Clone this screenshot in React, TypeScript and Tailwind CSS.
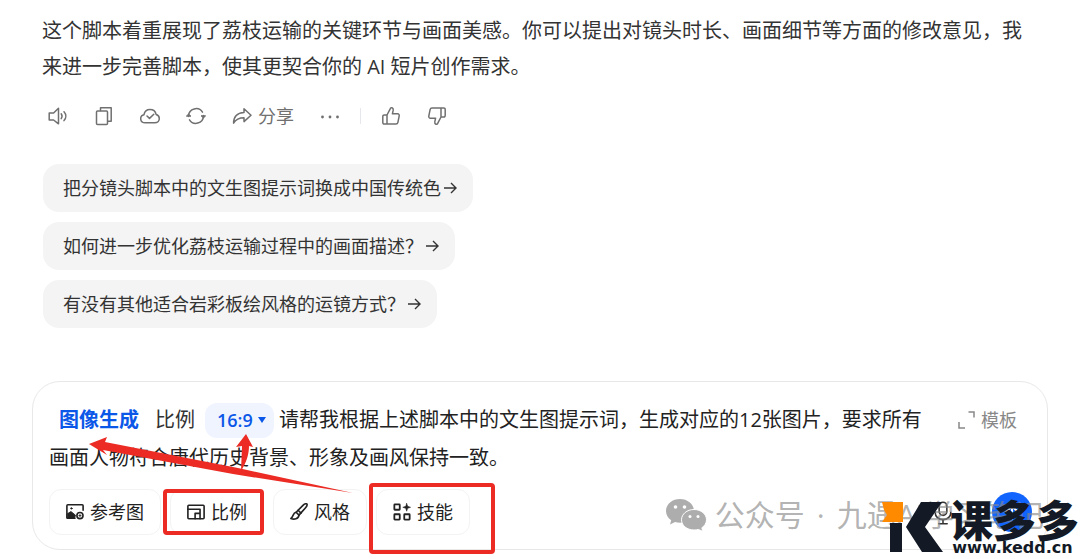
import React from 'react';

const suggestions = [
  '把分镜头脚本中的文生图提示词换成中国传统色',
  '如何进一步优化荔枝运输过程中的画面描述？',
  '有没有其他适合岩彩板绘风格的运镜方式？',
];

type IconProps = { children: React.ReactNode; className?: string; stroke?: number };

const Icon = ({ children, className = 'size-5', stroke = 1.5 }: IconProps) => (
  <svg
    viewBox="0 0 20 20"
    className={`shrink-0 ${className}`}
    fill="none"
    stroke="currentColor"
    strokeWidth={stroke}
    strokeLinecap="round"
    strokeLinejoin="round"
    aria-hidden="true"
  >
    {children}
  </svg>
);

const ThumbPath = () => (
  <path d="M6 9v9M6 9l3.2-6.2c.3-.9 1-1.3 1.8-1 1 .4 1.4 1.3 1.2 2.4l-.8 3.6h5.2c1.1 0 1.8.9 1.6 2l-1.3 6.6c-.2 1-.9 1.6-1.9 1.6H3.2c-.8 0-1.4-.6-1.4-1.4v-6.2C1.8 9.6 2.4 9 3.2 9z" />
);

const ActionBar = () => (
  <div className="mt-[19px] flex h-6 items-center gap-[26px] pl-4 text-[#707070]">
    <button aria-label="朗读">
      <Icon>
        <path d="M10.5 2.2v15.6L5.6 14H1.2V7h4.4z" />
        <path d="M13.2 7.8c1 1.4 1 3.4 0 4.8M16 5.8c2.4 2.6 2.4 6.2 0 8.8" />
      </Icon>
    </button>
    <button aria-label="复制">
      <Icon>
        <rect x="2.5" y="5" width="11" height="13.5" rx="1" />
        <path d="M6.5 4.5V1.8h10.7v13.4h-3.4" />
      </Icon>
    </button>
    <button aria-label="收藏">
      <Icon>
        <path d="M5.2 16.8c-2.6 0-4.5-1.7-4.5-4.1 0-2 1.3-3.6 3.3-4 .5-3 2.9-5.2 6-5.2s5.5 2 6.1 4.9c1.9.5 3.2 2.1 3.2 4.1 0 2.5-1.9 4.3-4.5 4.3z" />
        <path d="M7 10l2.5 2.4 4.3-4.2" />
      </Icon>
    </button>
    <button aria-label="重新生成">
      <Icon>
        <path d="M2.5 10.5v-.7a7.6 7.6 0 0 1 14-3.6M17.5 9.5v.7a7.6 7.6 0 0 1-14 3.6" />
        <path d="M.6 10l1.9-2 2.2 2zM15.3 10l2.2 2 1.9-2z" fill="currentColor" strokeWidth="1" />
      </Icon>
    </button>
    <button className="flex items-center gap-1.5 text-lg leading-6">
      <Icon>
        <path d="M12 2.8l7 6.4-7 6.4v-3.8c-5 0-8.2 1.7-10.4 5.4C1.6 10.8 5.6 7 12 6.6z" />
      </Icon>
      分享
    </button>
    <button aria-label="更多">
      <Icon>
        <g fill="currentColor" stroke="none">
          <circle cx="2.5" cy="11" r="1.4" />
          <circle cx="10" cy="11" r="1.4" />
          <circle cx="17.5" cy="11" r="1.4" />
        </g>
      </Icon>
    </button>
    <span className="-mx-1.5 h-4 w-px bg-gray-200" />
    <button aria-label="赞">
      <Icon>
        <ThumbPath />
      </Icon>
    </button>
    <button aria-label="踩">
      <Icon className="size-5 rotate-180">
        <ThumbPath />
      </Icon>
    </button>
  </div>
);

const Suggestions = () => (
  <div className="mt-9 flex flex-col items-start gap-2.5 pl-[11px]">
    {suggestions.map((text) => (
      <button
        key={text}
        className="flex h-12 items-center gap-0.5 rounded-2xl bg-[#f4f4f4] pr-4 pl-5 text-lg text-[#333]"
      >
        {text}
        <svg viewBox="0 0 14 12" className="h-3 w-3.5" fill="none" stroke="currentColor" strokeWidth="1.4">
          <path d="M1 6h12M8 1l5 5-5 5" />
        </svg>
      </button>
    ))}
  </div>
);

const Editor = () => (
  <div className="grid flex-1">
    <textarea
      aria-label="输入提示词"
      rows={2}
      className="col-start-1 row-start-1 block w-full resize-none overflow-hidden bg-transparent indent-[230px] text-xl leading-[38px] text-[#222] outline-none"
      defaultValue="请帮我根据上述脚本中的文生图提示词，生成对应的12张图片，要求所有画面人物符合唐代历史背景、形象及画风保持一致。"
    />
    {/* sits in the space left by the textarea's indent */}
    <div className="col-start-1 row-start-1 flex h-[38px] items-center self-start justify-self-start pl-2.5 text-xl text-[#333]">
      <span className="font-bold text-[#0b57e8]">图像生成</span>
      <label htmlFor="ratio" className="ml-4">
        比例
      </label>
      <span className="ml-2.5 grid h-[35px] w-[69px] items-center rounded-xl bg-[#f0f4ff] text-[#0b57e8]">
        <select
          id="ratio"
          className="col-start-1 row-start-1 w-full appearance-none bg-transparent pl-3 text-lg font-semibold outline-none"
        >
          <option>16:9</option>
          <option>4:3</option>
          <option>1:1</option>
        </select>
        <svg
          viewBox="0 0 8 6"
          className="pointer-events-none col-start-1 row-start-1 mr-2 h-1.5 w-2 justify-self-end"
          fill="currentColor"
        >
          <path d="M0 0h8L4 6z" />
        </svg>
      </span>
    </div>
  </div>
);

type ToolProps = { label: string; icon: React.ReactNode; mark?: React.ReactNode };

const Tool = ({ label, icon, mark }: ToolProps) => (
  <div className="relative">
    <button className="flex h-[46px] items-center gap-1.5 rounded-xl border border-[#f3f3f3] px-4 text-lg text-[#222]">
      {icon}
      {label}
    </button>
    {mark}
  </div>
);

const Tools = () => (
  <div className="mt-3 flex gap-[9px]">
    <Tool
      label="参考图"
      icon={
        <Icon className="size-[18px]" stroke={1.8}>
          <path d="M19 8V3a1 1 0 0 0-1-1H2a1 1 0 0 0-1 1v13a1 1 0 0 0 1 1h8" />
          <path d="M1.500 12l4-2.500 5 4-1 3.500h-8z" fill="currentColor" strokeWidth="1" />
          <circle cx="6" cy="6" r=".8" fill="currentColor" strokeWidth="1" />
          <circle cx="15.5" cy="14" r="3.4" />
          <path d="M15.5 12.8v2.4M14.3 14h2.4" strokeWidth="1" />
        </Icon>
      }
    />
    <Tool
      label="比例"
      icon={
        <Icon className="size-[18px]" stroke={1.8}>
          <rect x="1" y="2.5" width="18" height="15" rx="1" />
          <path d="M1 7h13.500v10.500M9 17.500v-6h5.500" />
        </Icon>
      }
      mark={
        <span className="pointer-events-none absolute inset-y-0 right-0 -left-[7px] rounded-sm border-4 border-[#ec2b24]" />
      }
    />
    <Tool
      label="风格"
      icon={
        <Icon className="size-[18px]" stroke={1.8}>
          <path d="M18.8 1c-1.6-.6-3 .3-4.4 1.7L6.800 10.300l3.200 3.200 7.300-8.300C18.600 3.700 19.600 2.400 18.800 1z" />
          <path d="M6.8 10.3C3 11 4 15.200 1 17.200c3.500 1.600 8.500.6 9-3.700M9 8l3.200 3.200" />
        </Icon>
      }
    />
    <Tool
      label="技能"
      icon={
        <Icon className="size-[18px]" stroke={2}>
          <rect x="1.5" y="1.5" width="6" height="6" rx=".6" />
          <rect x="1.5" y="12.5" width="6" height="6" rx=".6" />
          <rect x="12.5" y="12.5" width="6" height="6" rx=".6" />
          <path
            d="M15.200.5l1.100 3.200 3.200 1.100-3.200 1.100-1.100 3.200-1.100-3.200-3.200-1.100 3.200-1.100z"
            fill="currentColor"
            strokeWidth=".6"
          />
        </Icon>
      }
      mark={
        <span className="pointer-events-none absolute -top-1.5 -right-[25px] -bottom-[19px] -left-[7px] rounded-sm border-4 border-[#ec2b24]" />
      }
    />
  </div>
);

const Arrows = () => (
  <svg
    viewBox="0 0 350 120"
    className="pointer-events-none absolute top-12 left-0 h-[120px] w-[350px]"
    fill="#ec2b24"
    aria-hidden="true"
  >
    <path d="M56 14l18-7-2 5 133 26 115 25-120-19L70 20l4 5z" />
    <path d="M213 4l7 13-4-1c0 9-3 17-8 25l1-25-6 1z" />
  </svg>
);

const Composer = () => (
  <div className="relative mt-[53px] rounded-[28px] border border-[#e8e8e8] pt-[19px] pr-[30px] pb-[14px] pl-4">
    <div className="flex items-start">
      <Editor />
      <button className="ml-4 flex h-[38px] items-center gap-1 text-lg text-[#888]">
        <Icon>
          <path d="M11.5 2H17v5.500M2 12v6h6" strokeLinecap="butt" strokeLinejoin="miter" />
        </Icon>
        模板
      </button>
    </div>
    <Tools />
    <button aria-label="语音输入" className="absolute right-[92px] bottom-6 text-[#333]">
      <Icon className="size-6" stroke={1.3}>
        <rect x="6.8" y="1" width="6.4" height="11" rx="3.2" />
        <path d="M3.5 9.500c0 3.600 2.800 6 6.500 6s6.500-2.400 6.500-6M10 15.500V19M6.500 19h7" />
      </Icon>
    </button>
    <button
      aria-label="发送"
      className="absolute right-[15px] bottom-[17px] flex size-10 items-center justify-center rounded-full bg-[#1264ff] text-white"
    >
      <Icon stroke={2}>
        <path d="M10 17V4M4.500 9.500L10 4l5.500 5.500" />
      </Icon>
    </button>
    <Arrows />
  </div>
);

const Watermark = () => (
  <div className="pointer-events-none absolute right-9 bottom-6 flex items-center gap-2 text-[30px] leading-10 whitespace-nowrap text-[#888]/65">
    <svg viewBox="0 0 42 34" className="h-[34px] w-[42px]" aria-hidden="true">
      <path
        fill="#adadad"
        d="M15 1C7 1 1 6.300 1 13c0 3.800 2 7.100 5.200 9.300L5 26.500l5-2.500c1.600.5 3.300.8 5 .8C22.800 24.800 29 19.500 29 13S22.800 1 15 1z"
      />
      <path
        fill="#adadad"
        stroke="#fff"
        d="M29 11.500c-7 0-12.500 4.600-12.500 10.300S22 32 29 32c1.500 0 3-.2 4.300-.6L38 33.500l-1.200-3.700c2.900-1.900 4.700-4.800 4.700-8C41.500 16.100 36 11.500 29 11.500z"
      />
      <g fill="#fff">
        <circle cx="10.5" cy="9" r="1.8" />
        <circle cx="19.5" cy="9" r="1.8" />
        <circle cx="25" cy="18.5" r="1.5" />
        <circle cx="33" cy="18.5" r="1.5" />
      </g>
    </svg>
    <span className="flex gap-3">
      <span>公众号</span>
      <span>·</span>
      <span>九遇AI学习笔记</span>
    </span>
  </div>
);

const SiteLogo = () => (
  <div className="pointer-events-none absolute right-0 bottom-0 flex items-end gap-1.5 text-[#131a26]">
    <svg viewBox="0 0 62 50" className="mb-[7px] h-[50px] w-[62px]" aria-hidden="true">
      <path fill="#ff8a00" d="M0 0h21v20H0l5-7-3-5z" />
      <path fill="currentColor" d="M8 21h12v29H8zM39 0h21L43 25l18 25H40L24 25z" />
    </svg>
    <div className="flex flex-col items-center pr-px pb-[3px]">
      <span className="font-['Noto_Sans_CJK_SC',sans-serif] text-[43px] leading-[44px] font-black">课多多</span>
      <a
        href="#kedd"
        className="pointer-events-auto pr-1 font-['DejaVu_Sans',sans-serif] text-base leading-4 font-bold"
      >
        www.kedd.cn
      </a>
    </div>
  </div>
);

const App = () => {
  return (
    <main className="relative overflow-hidden bg-white px-8 pt-[13px] pb-[9px] font-['Open_Sans','Noto_Sans_CJK_SC',sans-serif]">
      <p className="pr-4 pl-2.5 text-xl leading-9 text-[#333]">
        这个脚本着重展现了荔枝运输的关键环节与画面美感。你可以提出对镜头时长、画面细节等方面的修改意见，我来进一步完善脚本，使其更契合你的 AI 短片创作需求。
      </p>
      <ActionBar />
      <Suggestions />
      <Composer />
      <Watermark />
      <SiteLogo />
    </main>
  );
};

export default App;
